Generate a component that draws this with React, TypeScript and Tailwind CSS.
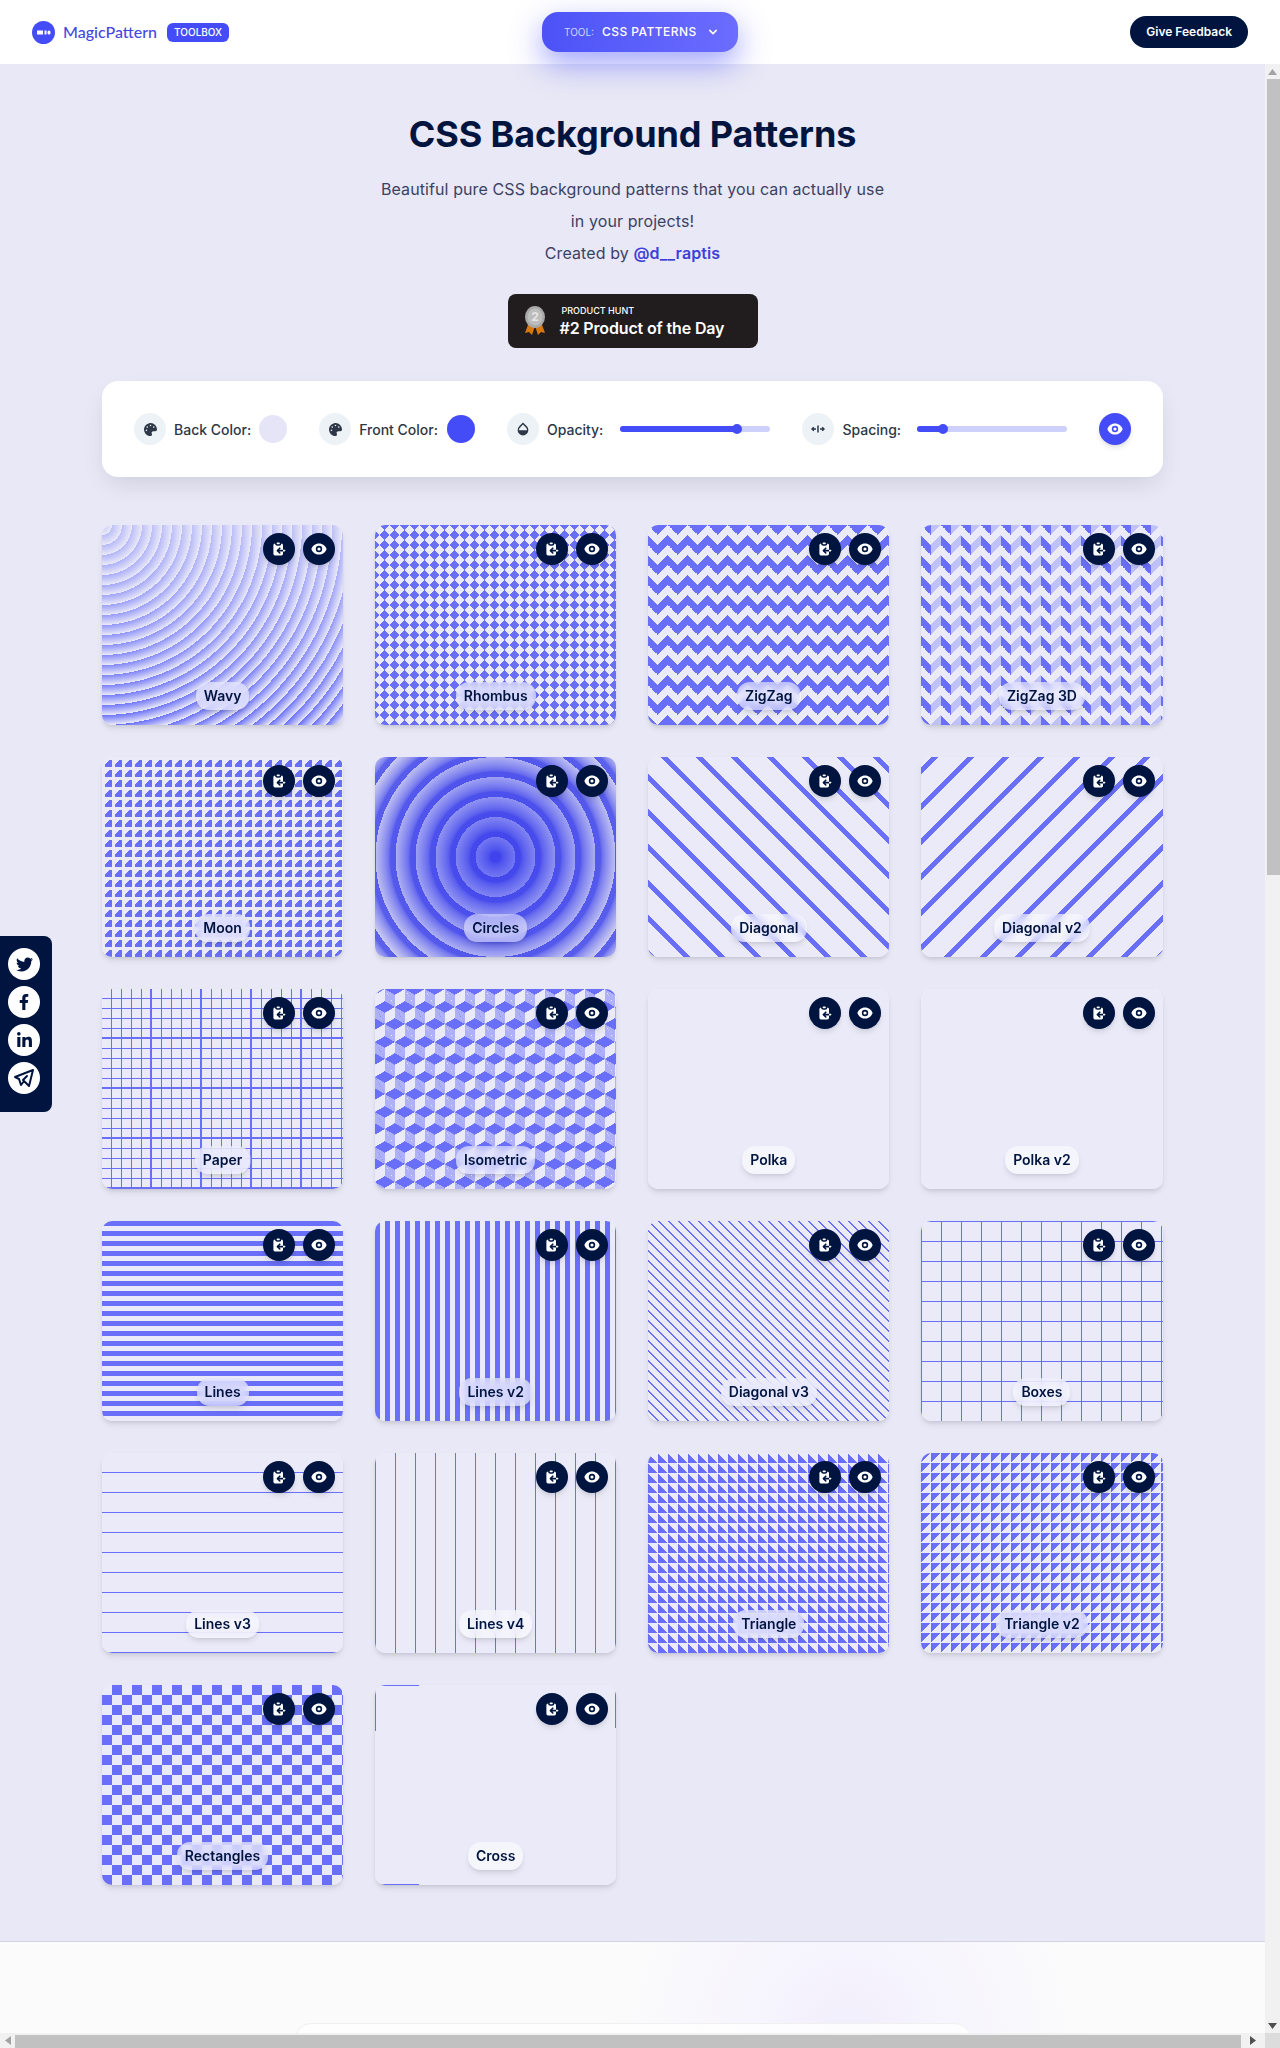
import { FaFacebookF, FaLinkedinIn, FaPalette, FaTwitter } from 'react-icons/fa';
import { HiChevronDown, HiClipboardCopy, HiEye } from 'react-icons/hi';
import { MdOpacity } from 'react-icons/md';
import { TbBrandTelegram } from 'react-icons/tb';

const patterns = [
  {
    name: 'Wavy',
    className:
      'bg-[image:repeating-radial-gradient(circle_at_0_0,transparent_0,#e5e5f7_10px),repeating-linear-gradient(#444cf755,#444cf7)]',
  },
  {
    name: 'Rhombus',
    className:
      'bg-[image:linear-gradient(135deg,#444cf7_25%,transparent_25%),linear-gradient(225deg,#444cf7_25%,transparent_25%),linear-gradient(45deg,#444cf7_25%,transparent_25%),linear-gradient(315deg,#444cf7_25%,#e5e5f7_25%)] bg-[length:10px_10px]',
  },
  {
    name: 'ZigZag',
    className:
      'bg-[image:linear-gradient(135deg,#444cf7_25%,transparent_25%),linear-gradient(225deg,#444cf7_25%,transparent_25%),linear-gradient(315deg,#444cf7_25%,transparent_25%),linear-gradient(45deg,#444cf7_25%,#e5e5f7_25%)] bg-[position:-10px_0,-10px_0,0_0,0_0] bg-[length:20px_20px]',
  },
  {
    name: 'ZigZag 3D',
    className:
      'bg-[image:linear-gradient(135deg,#444cf755_25%,transparent_25%),linear-gradient(225deg,#444cf7_25%,transparent_25%),linear-gradient(315deg,#444cf755_25%,transparent_25%),linear-gradient(45deg,#444cf7_25%,#e5e5f7_25%)] bg-[position:-10px_0,-10px_0,0_0,0_0] bg-[length:20px_20px]',
  },
  {
    name: 'Moon',
    className:
      'bg-[image:radial-gradient(ellipse_farthest-corner_at_10px_10px,#444cf7,#444cf7_50%,#e5e5f7_50%)] bg-[length:10px_10px]',
  },
  {
    name: 'Circles',
    className:
      'bg-[image:radial-gradient(circle_at_center_center,#444cf7,#e5e5f7),repeating-radial-gradient(circle_at_center_center,#444cf7,#444cf7,10px,transparent_20px,transparent_10px)] bg-blend-multiply',
  },
  {
    name: 'Diagonal',
    className:
      'bg-[image:repeating-linear-gradient(45deg,#444cf7,#444cf7_5px,#e5e5f7_5px,#e5e5f7_25px)]',
  },
  {
    name: 'Diagonal v2',
    className:
      'bg-[image:repeating-linear-gradient(-45deg,#444cf7,#444cf7_5px,#e5e5f7_5px,#e5e5f7_25px)]',
  },
  {
    name: 'Paper',
    className:
      'bg-[image:linear-gradient(#444cf7_2px,transparent_2px),linear-gradient(90deg,#444cf7_2px,transparent_2px),linear-gradient(#444cf7_1px,transparent_1px),linear-gradient(90deg,#444cf7_1px,#e5e5f7_1px)] bg-[length:50px_50px,50px_50px,10px_10px,10px_10px] bg-[position:-2px_-2px,-2px_-2px,-1px_-1px,-1px_-1px]',
  },
  {
    name: 'Isometric',
    className:
      'bg-[image:linear-gradient(30deg,#444cf7_12%,transparent_12.5%,transparent_87%,#444cf7_87.5%,#444cf7),linear-gradient(150deg,#444cf7_12%,transparent_12.5%,transparent_87%,#444cf7_87.5%,#444cf7),linear-gradient(30deg,#444cf7_12%,transparent_12.5%,transparent_87%,#444cf7_87.5%,#444cf7),linear-gradient(150deg,#444cf7_12%,transparent_12.5%,transparent_87%,#444cf7_87.5%,#444cf7),linear-gradient(60deg,#444cf777_25%,transparent_25.5%,transparent_75%,#444cf777_75%,#444cf777),linear-gradient(60deg,#444cf777_25%,transparent_25.5%,transparent_75%,#444cf777_75%,#444cf777)] bg-[length:20px_35px] bg-[position:0_0,0_0,10px_18px,10px_18px,0_0,10px_18px]',
  },
  { name: 'Polka', className: '' },
  { name: 'Polka v2', className: '' },
  {
    name: 'Lines',
    className:
      'bg-[image:linear-gradient(#444cf7_50%,#e5e5f7_50%)] bg-[length:10px_10px]',
  },
  {
    name: 'Lines v2',
    className:
      'bg-[image:linear-gradient(to_right,#444cf7,#444cf7_5px,#e5e5f7_5px,#e5e5f7)] bg-[length:10px_100%]',
  },
  {
    name: 'Diagonal v3',
    className:
      'bg-[image:repeating-linear-gradient(45deg,#444cf7_0,#444cf7_1px,#e5e5f7_0,#e5e5f7_50%)] bg-[length:10px_10px]',
  },
  {
    name: 'Boxes',
    className:
      'bg-[image:linear-gradient(#444cf7_1px,transparent_1px),linear-gradient(to_right,#444cf7_1px,#e5e5f7_1px)] bg-[length:20px_20px]',
  },
  {
    name: 'Lines v3',
    className:
      'bg-[image:repeating-linear-gradient(0deg,#444cf7,#444cf7_1px,#e5e5f7_1px,#e5e5f7)] bg-[length:20px_20px]',
  },
  {
    name: 'Lines v4',
    className:
      'bg-[image:repeating-linear-gradient(to_right,#444cf7,#444cf7_1px,#e5e5f7_1px,#e5e5f7)] bg-[length:20px_20px]',
  },
  {
    name: 'Triangle',
    className:
      'bg-[image:linear-gradient(45deg,#444cf7_50%,#e5e5f7_50%)] bg-[length:10px_10px]',
  },
  {
    name: 'Triangle v2',
    className:
      'bg-[image:linear-gradient(-45deg,#e5e5f7,#e5e5f7_50%,#444cf7_50%,#444cf7)] bg-[length:10px_10px]',
  },
  {
    name: 'Rectangles',
    className:
      'bg-[image:repeating-linear-gradient(45deg,#444cf7_25%,transparent_25%,transparent_75%,#444cf7_75%,#444cf7),repeating-linear-gradient(45deg,#444cf7_25%,#e5e5f7_25%,#e5e5f7_75%,#444cf7_75%,#444cf7)] bg-[position:0_0,10px_10px] bg-[length:20px_20px]',
  },
  {
    name: 'Cross',
    className:
      'bg-[image:linear-gradient(#444cf7,#444cf7),linear-gradient(#444cf7,#444cf7),linear-gradient(#444cf7,#444cf7),linear-gradient(#444cf7,#444cf7)] bg-[position:0_0,0_199px,0_0,240px_7px] bg-[length:44px_1px,44px_1px,1px_46px,1px_36px] bg-no-repeat',
  },
];

function RoundIcon({ children }: { children: React.ReactNode }) {
  return (
    <div className="flex h-8 w-8 shrink-0 items-center justify-center rounded-full bg-[#edf2f7] text-[#2d3748]">
      {children}
    </div>
  );
}

function Slider({ percent }: { percent: number }) {
  return (
    <div className="relative h-1.5 w-[150px] rounded-full bg-[#cdd0fb]">
      <div
        className="h-full rounded-full bg-[#444cf7]"
        style={{ width: `${percent}%` }}
      />
      <div
        className="absolute top-1/2 h-2.5 w-2.5 -translate-x-1/2 -translate-y-1/2 rounded-full bg-[#444cf7]"
        style={{ left: `${percent}%` }}
      />
    </div>
  );
}

function PatternCard({ name, className }: { name: string; className: string }) {
  return (
    <div className="relative h-[200px] overflow-hidden rounded-[10px] bg-white shadow-md">
      <div className={`h-full bg-[#e5e5f7] opacity-80 ${className}`} />
      <div className="absolute top-2 right-2 flex gap-2">
        <button className="flex h-8 w-8 items-center justify-center rounded-full bg-[#001440] text-white shadow-md">
          <HiClipboardCopy size={16} />
        </button>
        <button className="flex h-8 w-8 items-center justify-center rounded-full bg-[#001440] text-white shadow-md">
          <HiEye size={16} />
        </button>
      </div>
      <div className="absolute inset-x-0 bottom-[15px] flex justify-center">
        <span className="h-7 rounded-[13px] bg-white/50 px-2 text-sm leading-7 font-semibold text-[#001440] shadow-md backdrop-blur-xs">
          {name}
        </span>
      </div>
    </div>
  );
}

export default function App() {
  return (
    <div className="relative flex h-[2048px] w-[1280px] flex-col overflow-hidden bg-[#e8e8f6] font-['Inter',sans-serif]">
      <header className="relative z-10 grid h-16 shrink-0 grid-cols-3 items-center bg-white px-8">
        <div className="flex items-center">
          <svg width="23" height="23" viewBox="0 0 23 23">
            <circle cx="11.5" cy="11.5" r="11.5" fill="#444cf7" />
            <rect x="5" y="9.5" width="6" height="4" fill="#fff" />
            <rect x="12.5" y="9.5" width="2" height="4" fill="#fff" />
            <rect x="15.5" y="9.5" width="3" height="4" rx="1.5" fill="#fff" />
          </svg>
          <span className="ml-2 font-['Lato',sans-serif] text-base font-medium text-[#4548e0]">
            MagicPattern
          </span>
          <span className="ml-2.5 flex h-[19px] items-center rounded-md bg-[#444cf7] px-[7px] text-[10px] font-medium text-white">
            TOOLBOX
          </span>
        </div>
        <div className="flex justify-center">
          <button className="flex h-10 w-[196px] items-center rounded-2xl bg-gradient-to-r from-[#4c52f6] to-[#6c6cff] pl-[22px] text-white shadow-[0_12px_30px_0_rgba(68,76,247,0.5)]">
            <span className="text-[10px] text-white/75">TOOL:</span>
            <span className="ml-2 text-xs font-medium tracking-[0.45px]">CSS PATTERNS</span>
            <HiChevronDown size={16} className="ml-2" />
          </button>
        </div>
        <div className="flex justify-end">
          <button className="h-8 rounded-full bg-[#001440] px-4 text-xs font-semibold text-white">
            Give Feedback
          </button>
        </div>
      </header>

      <div className="flex min-h-0 flex-1">
        <div className="min-w-0 flex-1">
          <main className="pt-[50px] pb-14">
            <h1 className="text-center text-4xl font-bold tracking-[-0.13px] text-[#001440]">
              CSS Background Patterns
            </h1>
            <p className="mx-auto mt-[19px] max-w-lg text-center text-base leading-8 tracking-[0.1px] text-[#3b4263]">
              Beautiful pure CSS background patterns that you can actually use in your projects!
              <br />
              Created by <span className="font-semibold text-[#3d40d8]">@d__raptis</span>
            </p>
            <div className="mt-[25px] flex justify-center">
              <div className="flex h-[54px] w-[250px] items-center rounded-lg bg-[#211d1e] pl-4 text-white">
                <svg width="22" height="30" viewBox="0 0 22 30">
                  <path d="M5 16 L1 27 L5 26 L8 29 L11 20 L14 29 L17 26 L21 27 L17 16 Z" fill="#d9770f" />
                  <ellipse cx="11" cy="11" rx="10" ry="11" fill="#a8a8a8" />
                  <ellipse cx="11" cy="11" rx="7.5" ry="8.5" fill="#bdbdbd" />
                  <text x="11" y="15" textAnchor="middle" fontSize="12" fontWeight="700" fill="#e6e6e6">
                    2
                  </text>
                </svg>
                <div className="ml-[14px]">
                  <div className="ml-0.5 text-[9px] leading-3 font-medium">PRODUCT HUNT</div>
                  <div className="mt-px text-base leading-5 font-semibold tracking-[-0.15px]">
                    #2 Product of the Day
                  </div>
                </div>
              </div>
            </div>

            <div className="mt-[33px] ml-[102px] w-[1060.5px]">
              <div className="flex h-24 items-center gap-8 rounded-2xl bg-white px-8 whitespace-nowrap shadow-[0_10px_25px_-5px_rgba(0,0,40,0.12)]">
                <div className="flex items-center gap-2">
                  <RoundIcon>
                    <FaPalette size={13} />
                  </RoundIcon>
                  <span className="mt-0.5 text-sm font-medium text-[#2d3748]">Back Color:</span>
                  <div className="h-7 w-7 rounded-full bg-[#e5e5f7]" />
                </div>
                <div className="flex items-center gap-2">
                  <RoundIcon>
                    <FaPalette size={13} />
                  </RoundIcon>
                  <span className="mt-0.5 mr-px text-sm font-medium text-[#2d3748]">Front Color:</span>
                  <div className="h-7 w-7 rounded-full bg-[#444cf7]" />
                </div>
                <div className="flex items-center gap-2">
                  <RoundIcon>
                    <MdOpacity size={16} />
                  </RoundIcon>
                  <span className="mt-0.5 mr-[9px] text-sm font-medium text-[#2d3748]">Opacity:</span>
                  <Slider percent={78} />
                </div>
                <div className="flex items-center gap-2">
                  <RoundIcon>
                    <svg width="14" height="14" viewBox="0 0 14 14" fill="none" stroke="currentColor" strokeWidth="1.5">
                      <path d="M7 3.5v7M1 7h4M9 7h4M2.8 5.2 1 7l1.8 1.8M11.2 5.2 13 7l-1.8 1.8" />
                    </svg>
                  </RoundIcon>
                  <span className="mt-0.5 mr-2 text-sm font-medium text-[#2d3748]">Spacing:</span>
                  <Slider percent={17} />
                </div>
                <button className="ml-auto flex h-8 w-8 items-center justify-center rounded-full bg-[#444cf7] text-white shadow-md">
                  <HiEye size={16} />
                </button>
              </div>

              <div className="mt-12 grid grid-cols-4 gap-8">
                {patterns.map((p) => (
                  <PatternCard key={p.name} name={p.name} className={p.className} />
                ))}
              </div>
            </div>
          </main>

          <footer className="h-[200px] border-t border-[#d2d2e0] bg-[#fbfbfb] bg-[image:radial-gradient(circle_at_850px_92px,#f1eefc_0,#f7f5fd_100px,#fbfbfb_240px)] pt-[81px]">
            <div className="mx-auto h-20 w-[676px] rounded-t-2xl border border-[#f0f0f0] bg-white/80" />
          </footer>
        </div>

        {/* vertical scrollbar */}
        <div className="flex w-[15px] shrink-0 flex-col bg-[#f1f1f1]">
          <div className="flex h-[15px] items-center justify-center">
            <svg width="9" height="6" viewBox="0 0 9 6">
              <path d="M4.5 0 9 6H0z" fill="#a3a3a3" />
            </svg>
          </div>
          <div className="ml-0.5 h-[796px] bg-[#c1c1c1]" />
          <div className="flex-1" />
          <div className="flex h-[15px] items-center justify-center">
            <svg width="9" height="6" viewBox="0 0 9 6">
              <path d="M4.5 6 9 0H0z" fill="#505050" />
            </svg>
          </div>
        </div>
      </div>

      {/* horizontal scrollbar */}
      <div className="flex h-[15px] shrink-0 items-center bg-[#f1f1f1]">
        <div className="flex h-full w-[15px] items-center justify-center">
          <svg width="6" height="9" viewBox="0 0 6 9">
            <path d="M0 4.5 6 0v9z" fill="#a3a3a3" />
          </svg>
        </div>
        <div className="mt-0.5 h-[13px] w-[1226px] bg-[#c1c1c1]" />
        <div className="flex h-full w-6 items-center justify-center">
          <svg width="6" height="9" viewBox="0 0 6 9">
            <path d="M6 4.5 0 0v9z" fill="#505050" />
          </svg>
        </div>
        <div className="h-full flex-1 bg-[#dcdcdc]" />
      </div>

      <div className="absolute top-[936px] left-0 flex h-44 w-[52px] flex-col gap-1.5 rounded-r-lg bg-[#001440] py-3 pl-2 text-[#001440]">
        <div className="flex h-8 w-8 items-center justify-center rounded-full bg-white">
          <FaTwitter size={17} />
        </div>
        <div className="flex h-8 w-8 items-center justify-center rounded-full bg-white">
          <FaFacebookF size={16} />
        </div>
        <div className="flex h-8 w-8 items-center justify-center rounded-full bg-white">
          <FaLinkedinIn size={17} />
        </div>
        <div className="flex h-8 w-8 items-center justify-center rounded-full bg-white">
          <TbBrandTelegram size={24} />
        </div>
      </div>
    </div>
  );
}
